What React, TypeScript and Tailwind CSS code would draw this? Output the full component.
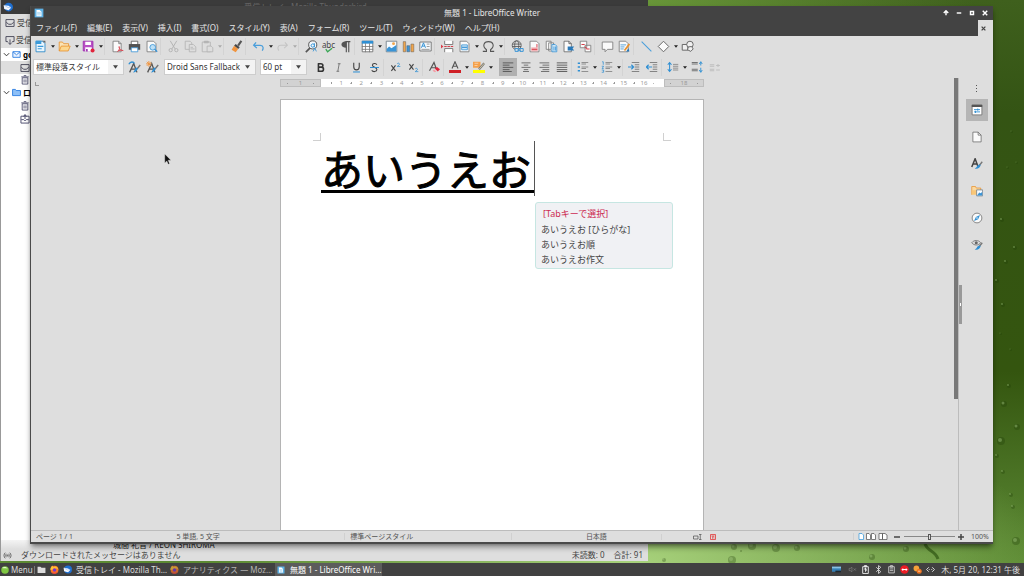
import React from 'react'

const icons: Record<string, React.ReactNode> = {
  newDoc: (
    <>
      <path d="M2.5 1.5h8l3 3v10h-11z" fill="#eaf5fc" stroke="#1f83c6" />
      <path d="M2 1h7v4H2zM4.500 7h7v1.500h-7zM4.500 10h5v1.500h-5z" fill="#3a9ad9" />
      <path d="M10 1h4v3z" fill="#666" />
    </>
  ),
  open: (
    <>
      <path d="M1.500 13.500v-11h4l1.500 2h6v3" fill="#fbe3b5" stroke="#e8912d" />
      <path d="M1.500 13.500l2.500-6h11l-2.500 6z" fill="#fcd78f" stroke="#e8912d" />
    </>
  ),
  save: (
    <>
      <path d="M1.500 1.500h12v12h-12z" fill="#b94fc4" stroke="#9b2fae" />
      <path d="M4 2h7v4H4zM4 9h8v5H4z" fill="#fff" />
      <path d="M5 11h2v3H5z" fill="#9b2fae" />
      <circle cx="13" cy="13" r="2.500" fill="#e0243b" />
    </>
  ),
  pdf: (
    <>
      <path d="M2.500 1.500h7l3 3v10h-10z" fill="#fafafa" stroke="#777" />
      <path d="M9.500 1.500v3h3" fill="none" stroke="#777" />
      <path d="M8 14c3-2 3-5 2-6-1 2 2 5 5 5-3-1-5 0-7 1z" fill="#ed9aa0" stroke="#d8404b" />
    </>
  ),
  print: (
    <>
      <path d="M4 1.500h8V6H4z" fill="#fff" stroke="#555" />
      <path d="M1 5h14v7H1z" fill="#525252" />
      <path d="M4 9.500h8v5H4z" fill="#fff" stroke="#3a94d6" />
    </>
  ),
  preview: (
    <>
      <path d="M2.500 1.500h8l3 3v10h-11z" fill="#fafafa" stroke="#777" />
      <circle cx="9.500" cy="9" r="3.500" fill="#bfe0f5" stroke="#3a94d6" />
      <path d="M12 11.500l3 3" stroke="#3a94d6" strokeWidth="1.800" />
    </>
  ),
  cut: (
    <g fill="none" stroke="#b3b3b3" strokeWidth="1.200">
      <path d="M4 1l6 10M12 1L6 11" />
      <circle cx="4.500" cy="12.500" r="2" />
      <circle cx="11.500" cy="12.500" r="2" />
    </g>
  ),
  copy: (
    <g fill="#dedede" stroke="#b3b3b3">
      <path d="M1.500 1.500h6l2 2v8h-8z" />
      <path d="M6.500 5.500h5l3 3v6h-8z" />
      <path d="M8 9h3M8 11h5" />
    </g>
  ),
  paste: (
    <g fill="#dedede" stroke="#b3b3b3">
      <path d="M1.500 2.500h10v12h-10z" />
      <path d="M4 1.500h5v2H4z" fill="#b3b3b3" />
      <path d="M7.500 7.500h5l2 2v5h-7z" />
    </g>
  ),
  brush: (
    <>
      <path d="M14 1l-4 6" stroke="#555" strokeWidth="2.500" />
      <path d="M7 5l5 4-2 2-5-4z" fill="#484848" />
      <path d="M5 7l5 4-3 4-5-3z" fill="#f0943e" />
    </>
  ),
  undo: <path d="M5 3L2 6.500 6 10M2.500 6.500H10c4 0 4.500 4 2.500 6.500" fill="none" stroke="#4a9edb" strokeWidth="1.500" />,
  redo: <path d="M11 3l3 3.500-4 3.500M13.500 6.500H6c-4 0-4.500 4-2.500 6.500" fill="none" stroke="#c4c4c4" strokeWidth="1.300" />,
  find: (
    <>
      <circle cx="9.500" cy="6" r="5" fill="#f4f8fb" stroke="#555" strokeWidth="1.200" />
      <path d="M6 10l-5 5" stroke="#555" strokeWidth="2" />
      <path d="M11.500 4v5M11.500 6.500a2 2 0 1 0-.1 1" fill="none" stroke="#2f8fd3" strokeWidth="1.200" />
      <path d="M10 14l2-4 2 4" fill="none" stroke="#2f8fd3" />
    </>
  ),
  pilcrow: (
    <>
      <path d="M8 2h6M9 2v13M12 2v13" stroke="#555" strokeWidth="1.400" />
      <path d="M9 1.500v8C1 9.500 1 1.500 9 1.500z" fill="#555" />
    </>
  ),
  table: (
    <>
      <path d="M1.500 1.500h13v13h-13z" fill="#fff" stroke="#666" />
      <path d="M1 1h14v3.500H1z" fill="#2f8fd3" />
      <path d="M1 8h14M1 11.500h14M5.500 4v11M10.500 4v11" stroke="#777" />
    </>
  ),
  image: (
    <>
      <path d="M1.500 1.500h13v13h-13z" fill="#f7fbfe" stroke="#6c7780" />
      <path d="M2 14v-3l3-3 3 2 6-4v8z" fill="#3a94d6" />
      <circle cx="10.500" cy="4.500" r="1.800" fill="#f2a54a" />
    </>
  ),
  chart: (
    <g stroke="#5a5a5a" strokeWidth=".600">
      <path d="M1.500 2h3v12.500h-3z" fill="#f2a54a" />
      <path d="M6 7h3.500v7.500H6z" fill="#3a94d6" />
      <path d="M11 5h3.500v9.500H11z" fill="#f2a54a" />
    </g>
  ),
  textBox: (
    <>
      <path d="M1 2.500h14v11H1z" fill="#f4f8fb" stroke="#666" />
      <path d="M3 9.500l2.500-6 2.500 6M4 7.500h3" fill="none" stroke="#2f8fd3" strokeWidth="1.200" />
      <path d="M9.500 5H13M9.500 8H13M3 11.500h10" stroke="#888" />
    </>
  ),
  pageBreak: (
    <>
      <path d="M4.500 1v4.500h10V1M4.500 15v-4.500h10V15" fill="#fff" stroke="#666" />
      <path d="M4 8h12" stroke="#d8404b" strokeDasharray="3 1" strokeWidth="1.300" />
      <path d="M0 5.500L3 8l-3 2.500z" fill="#d8404b" />
    </>
  ),
  field: (
    <>
      <path d="M2.500 1.500h8l3 3v10h-11z" fill="#fafafa" stroke="#777" />
      <path d="M4.500 6h7v6h-7z" fill="#cfe7f6" stroke="#3a94d6" />
      <path d="M5 9h6" stroke="#3a94d6" strokeWidth="1.500" />
    </>
  ),
  omega: <path d="M1 14h4.500v-2C0 8 2 2 8 2s8 6 2.500 10v2H15" fill="none" stroke="#555" strokeWidth="1.300" />,
  link: (
    <>
      <g fill="none" stroke="#555">
        <circle cx="7" cy="6.500" r="5.500" />
        <ellipse cx="7" cy="6.500" rx="2.500" ry="5.500" />
        <path d="M1.500 5h11M1.500 8h11" />
      </g>
      <path d="M5 10.500h4v3.500H5zM11 10.500h4v3.500h-4zM8 12.500h4" fill="#dedede" stroke="#3a94d6" strokeWidth="1.200" />
    </>
  ),
  footnote: (
    <>
      <path d="M2.500 1.500h8l3 3v10h-11z" fill="#fafafa" stroke="#777" />
      <path d="M4 9h8v5H4z" fill="#f3b2b6" />
      <path d="M4.500 11.500h7M11 5v4" stroke="#d8404b" strokeWidth="1.200" />
    </>
  ),
  endnote: (
    <>
      <path d="M1.500 1.500h6v10h-6zM4.500 3.500h6v10h-6z" fill="#fafafa" stroke="#777" />
      <path d="M8.500 5.500h4l2 2v7h-6z" fill="#cfe7f6" stroke="#3a94d6" />
      <path d="M11 8v5M13 8v5" stroke="#3a94d6" />
    </>
  ),
  bookmark: (
    <>
      <path d="M2.500 1.500h6l3 3v10h-9z" fill="#fafafa" stroke="#666" />
      <path d="M8.500 1.500v3h3" fill="none" stroke="#555" />
      <path d="M7 8h8l-2 2.500 2 2.500H7z" fill="#2878b8" />
    </>
  ),
  crossRef: (
    <>
      <path d="M1.500 1.500h8v8h-8zM7.500 6.500h7v8h-7z" fill="#fafafa" stroke="#777" />
      <path d="M3 5.500h4M9 11h4M7 8l3 3" stroke="#d8404b" strokeWidth="1.300" />
    </>
  ),
  comment: <path d="M1.500 2.500h13v9H8l-3 3v-3H1.500z" fill="#fafafa" stroke="#777" />,
  track: (
    <>
      <path d="M1.500 1.500h8l3 3v10h-11z" fill="#fafafa" stroke="#777" />
      <path d="M3 6h7M3 8.500h5M3 11h4" stroke="#3a94d6" />
      <path d="M14 5l-6 8" stroke="#e8912d" strokeWidth="2.200" />
      <path d="M13 10l-3 4h4z" fill="#2878b8" />
    </>
  ),
  line: <path d="M2 2l12 12" stroke="#4a9edb" strokeWidth="1.300" />,
  diamond: <path d="M8 1.500L14.500 8 8 14.500 1.500 8z" fill="#fafafa" stroke="#666" strokeWidth="1.200" />,
  draw: (
    <g fill="#f0f0f0" stroke="#666" strokeWidth="1.200">
      <path d="M1.500 5.500h7v7h-7z" />
      <circle cx="11" cy="5.500" r="4" />
      <path d="M9 8.500l4-.5 2 3-3 3-4-2z" />
    </g>
  ),
  updateStyle: (
    <>
      <path d="M2 14L7 3l4 11M3.500 10h6" fill="none" stroke="#555" strokeWidth="1.600" />
      <path d="M1 4c2-4 6-3 7-1" fill="none" stroke="#2f8fd3" strokeWidth="1.600" />
      <path d="M15 5l-4 5" stroke="#777" strokeWidth="1.800" />
      <path d="M12 9c-1 4-3 5-6 5 2-1 2-4 4-6z" fill="#2f8fd3" />
    </>
  ),
  newStyle: (
    <>
      <path d="M2 14L7 3l4 11M3.500 10h6" fill="none" stroke="#555" strokeWidth="1.600" />
      <path d="M3.500 0v7M0 3.500h7M1 1l5 5M6 1L1 6" stroke="#f0943e" strokeWidth="1.100" />
      <path d="M15 5l-4 5" stroke="#777" strokeWidth="1.800" />
      <path d="M12 9c-1 4-3 5-6 5 2-1 2-4 4-6z" fill="#2f8fd3" />
    </>
  ),
  bold: <path d="M4 2.500h4.500c4 0 4 5 0 5H5h4c4.500 0 4.500 6 0 6H5v-11" fill="none" stroke="#333" strokeWidth="2.300" />,
  italic: <path d="M7 2.500h4M5 13.500h4M9 2.500l-2 11" fill="none" stroke="#666" strokeWidth="1.200" />,
  underline: (
    <>
      <path d="M4 1v6c0 6 8 6 8 0V1" fill="none" stroke="#444" strokeWidth="1.600" />
      <path d="M3 14.500h10" stroke="#2f8fd3" strokeWidth="1.500" />
    </>
  ),
  strike: (
    <>
      <path d="M11.500 4C10 1 4.500 2 5 5s6.500 2.500 6.500 6-6 4-7.500 1" fill="none" stroke="#444" strokeWidth="1.500" />
      <path d="M1.500 8h13" stroke="#2f8fd3" strokeWidth="1.500" />
    </>
  ),
  sup: (
    <>
      <path d="M2 5l6 8M8 5l-6 8" stroke="#444" strokeWidth="1.600" />
      <path d="M10.500 2.500c2-2 4 0 3 1.500l-3 2.500H15" fill="none" stroke="#2f8fd3" strokeWidth="1.100" />
    </>
  ),
  sub: (
    <>
      <path d="M2 3l6 8M8 3l-6 8" stroke="#444" strokeWidth="1.600" />
      <path d="M10.500 10c2-2 4 0 3 1.500l-3 2.500H15" fill="none" stroke="#2f8fd3" strokeWidth="1.100" />
    </>
  ),
  clear: (
    <>
      <path d="M2 13L8 2l3 8M4 9h6" fill="none" stroke="#555" strokeWidth="1.600" />
      <path d="M9 10l3-2 4 3-3 3z" fill="#e0243b" />
      <path d="M8 11l3 3-2 1-3-2z" fill="#f3a0a8" />
    </>
  ),
  fontColor: (
    <>
      <path d="M4 10l4-9 4 9M5.500 7h5" fill="none" stroke="#555" strokeWidth="1.500" />
      <path d="M0 12h16v4H0z" fill="#cf2027" />
    </>
  ),
  highlight: (
    <>
      <path d="M0 1h10v8H0z" fill="#f5a04a" />
      <path d="M2 3h5M2 6h4" stroke="#fbdcb8" />
      <path d="M15 3L8 11" stroke="#777" strokeWidth="3" />
      <path d="M15 3L8 11" stroke="#e8dcb0" strokeWidth="1" />
      <path d="M0 12h16v4H0z" fill="#ffff00" />
    </>
  ),
  left: <path d="M1 2.500h14M1 5.500h9M1 8.500h14M1 11.500h9M1 14h12" stroke="#555" strokeWidth="1.200" />,
  center: <path d="M2 2.500h12M5 5.500h6M2 8.500h12M5 11.500h6M4 14h8" stroke="#666" strokeWidth="1.200" />,
  right: <path d="M2 2.500h13M6 5.500h9M2 8.500h13M6 11.500h9M4 14h11" stroke="#666" strokeWidth="1.200" />,
  justify: <path d="M1 2.500h14M1 5.500h14M1 8.500h14M1 11.500h14M1 14h14" stroke="#555" strokeWidth="1.200" />,
  bullets: (
    <>
      <path d="M6 2h9M6 4h6M6 8h9M6 10h6M6 14h9" stroke="#777" />
      <path d="M1 2h3v2H1zM1 7h3v2H1zM1 12h3v2H1z" fill="#2f8fd3" />
    </>
  ),
  numbers: (
    <>
      <path d="M6 2h9M6 4h6M6 8h9M6 10h6M6 14h9" stroke="#777" />
      <path d="M1.500 1h1.500v4M1 7h2.500l-2 3h2M1 12h2.500v3H1" fill="none" stroke="#2f8fd3" />
    </>
  ),
  indent: (
    <>
      <path d="M5 2h10M9 5h6M9 8h6M9 11h6M5 14h10" stroke="#666" />
      <path d="M0 8h7M4.500 5L7.500 8l-3 3" fill="none" stroke="#2f8fd3" strokeWidth="1.500" />
    </>
  ),
  outdent: (
    <>
      <path d="M5 2h10M9 5h6M9 8h6M9 11h6M5 14h10" stroke="#666" />
      <path d="M8 8H1M3.500 5L.500 8l3 3" fill="none" stroke="#2f8fd3" strokeWidth="1.500" />
    </>
  ),
  lineSpacing: (
    <>
      <path d="M8 4.500h7M8 7h7M8 9.500h7M8 12h7" stroke="#777" />
      <path d="M3.500 2v12M1 5l2.500-3L6 5M1 11l2.500 3L6 11" fill="none" stroke="#2f8fd3" strokeWidth="1.400" />
    </>
  ),
  paraUp: (
    <>
      <path d="M1 2h8M1 4h8M1 11h8M1 13h8" stroke="#666" strokeWidth="1.200" />
      <path d="M13 1v5M11 4l2-3 2 3M13 9v6M11 12l2 3 2-3" fill="none" stroke="#2f8fd3" strokeWidth="1.200" />
    </>
  ),
  paraDown: <path d="M1 5h6M1 7h6M1 11h6M1 13h6M12 4v4M9.500 6h5M9.500 12h5" fill="none" stroke="#bdbdbd" strokeWidth="1.300" />,
  properties: (
    <>
      <path d="M1.500 1.500h13v13h-13z" fill="#fff" stroke="#666" />
      <path d="M1 1h14v3H1z" fill="#555" />
      <path d="M4 7.500h8M4 10.500h8M9 6v3M6 9v3" stroke="#2f8fd3" strokeWidth="1.200" />
    </>
  ),
  page: (
    <>
      <path d="M2.500 1.500h7l4 4v9h-11z" fill="#fafafa" stroke="#666" />
      <path d="M9.500 1.500v4h4" fill="none" stroke="#666" />
    </>
  ),
  styles: (
    <>
      <path d="M1 12L5.500 1l4 11M3 8h6" fill="none" stroke="#444" strokeWidth="2" />
      <path d="M15 5l-4 5" stroke="#777" strokeWidth="1.800" />
      <path d="M13 9c-1 4-4 6-8 5 3-1 2-3 5-5z" fill="#2f8fd3" />
    </>
  ),
  gallery: (
    <>
      <path d="M1 13V2h5l1 2h6v3" fill="#fbd9a0" stroke="#e8912d" />
      <path d="M1 7h8v6H1z" fill="#f9c777" />
      <path d="M7.500 6.500h8v8h-8z" fill="#f7fbfe" stroke="#6c7780" />
      <path d="M8 14l3-4 2 1 2-2v5z" fill="#3a94d6" />
    </>
  ),
  navigator: (
    <>
      <circle cx="8" cy="8" r="6.500" fill="#fafafa" stroke="#666" />
      <path d="M12 4l-2.500 5.500L4 12l2.500-5.500z" fill="#2f8fd3" />
      <circle cx="8" cy="8" r="1" fill="#fff" />
    </>
  ),
  inspector: (
    <>
      <path d="M1 5c3-4 9-4 12 0-3 4-9 4-12 0z" fill="#ddd" stroke="#777" strokeWidth="1.200" />
      <circle cx="7" cy="5" r="2" fill="#666" />
      <path d="M15 5l-4 5" stroke="#777" strokeWidth="1.800" />
      <path d="M13 9c-1 4-4 6-8 5 3-1 2-3 5-5z" fill="#2f8fd3" />
    </>
  ),
  // mail client and panel
  inbox: <path d="M1.500 2.500h13v11h-13zM2 7l4 3h4l4-3" fill="none" stroke="#4b4b5c" strokeWidth="1.500" />,
  getMail: <path d="M4.500 10.500h-3v-8h13v8h-3M8 7v8M5 12l3 3 3-3" fill="none" stroke="#4b4b5c" strokeWidth="1.500" />,
  trash: <path d="M3.500 4.500h9v10h-9zM2 3h12M6 1h4M6.500 7v5M9.500 7v5" fill="none" stroke="#4b4b6c" strokeWidth="1.400" />,
  outbox: <path d="M1.500 3.500h13v11h-13zM2 9h4l2 2 2-2h4M8 8V1M5.500 4L8 1l2.500 3" fill="none" stroke="#4b4b6c" strokeWidth="1.500" />,
  mail: <path d="M1.500 3h13v10h-13zM2 3.500l6 5 6-5" fill="#e9f2ff" stroke="#2a7de1" strokeWidth="1.600" />,
  folderBlue: <path d="M1 13.500v-11h5l1.500 2H15v9z" fill="#8ec0f7" stroke="#2a7de1" strokeWidth="1.600" />,
  chevron: <path d="M2 5l6 6 6-6" fill="none" stroke="#333" strokeWidth="2.200" />,
  writer: (
    <>
      <path d="M1 1h14v14H1z" fill="#5fb2e6" />
      <path d="M4 3h5l3 3v7H4z" fill="#fff" />
      <path d="M5 7h6M5 9h6M5 11h6" stroke="#8cc6ea" />
    </>
  ),
  thunderbird: (
    <>
      <circle cx="9" cy="8" r="7" fill="#1f6fd0" />
      <path d="M1 5l8 1 4 3-4 4-7-2z" fill="#f4f8ff" />
      <path d="M2 5l6 4 5-1" fill="none" stroke="#99b9e6" />
    </>
  ),
  firefox: (
    <>
      <circle cx="8" cy="8.500" r="7" fill="#ff7b1c" />
      <path d="M1 9C0 5 3 3 4 1l2 3c4-3 8 0 9 5-2-3-4-3-5-2z" fill="#ffc338" />
      <circle cx="8" cy="9" r="3.200" fill="#7a35c9" />
      <path d="M2 11c3 4 9 4 12-1-1 6-9 8-12 1z" fill="#f02e50" />
    </>
  ),
  files: <path d="M1 14V3h5l2 2h7v9z" fill="#dcdcdc" />,
  mint: (
    <>
      <circle cx="8" cy="8" r="7.500" fill="#7fc742" />
      <path d="M2 4c4-3 9-2 11 1-4-1-8 0-11-1z" fill="#e5f6d4" />
    </>
  ),
  signal: (
    <g fill="none" stroke="#555" strokeWidth="1.500">
      <path d="M4 3C1 6 1 10 4 13M12 3c3 3 3 7 0 10M6 5c-1.500 2-1.500 4 0 6M10 5c1.500 2 1.500 4 0 6" />
      <circle cx="8" cy="8" r="1" />
    </g>
  ),
  display: (
    <>
      <path d="M0 3h16v9H0z" fill="#357fb5" />
      <path d="M0 3h16v3H0z" fill="#8ac0e2" />
      <path d="M6 10h10v3H6z" fill="#1d2830" />
    </>
  ),
  mute: <path d="M2 6h2l3-2v8L4 10H2zM10 6l4 4M14 6l-4 4" fill="none" stroke="#8b8b8b" />,
  battery: <path d="M3 3h10v12H3zM6 1h4v2H6zM8 5v7M6 8l2-3 2 5" fill="none" stroke="#f2f2f2" strokeWidth="1.600" />,
  bluetooth: <path d="M4 4l8 8-4 3V1l4 3-8 8" fill="none" stroke="#d8d8d8" strokeWidth="1.600" />,
  clipboard: <path d="M3 3h10v11H3zM6 1h4v3H6zM5 7h6M5 10h6" fill="none" stroke="#c8c8c8" strokeWidth="1.600" />,
  redDot: (
    <>
      <circle cx="8" cy="8" r="7.500" fill="#ec1c24" />
      <path d="M3 8h10M5 6v4M11 6v4" stroke="#fff" strokeWidth="1.800" />
    </>
  ),
  orange: (
    <>
      <circle cx="6" cy="6" r="5" fill="#f5a13a" />
      <circle cx="11" cy="11" r="4.500" fill="#ee7420" />
      <path d="M9 11h4" stroke="#fff" />
    </>
  ),
  network: <path d="M5 4L1 8l4 4M11 4l4 4-4 4M5 8h1.500M9.500 8H11" fill="none" stroke="#e6e6e6" strokeWidth="1.700" />,
}

function Icon({ name, className = 'size-[13px]' }: { name: string; className?: string }) {
  return (
    <svg viewBox="0 0 16 16" className={`shrink-0 ${className}`} fill="none" aria-hidden="true">
      {icons[name]}
    </svg>
  )
}

function Arrow({ muted = false }: { muted?: boolean }) {
  return (
    <svg viewBox="0 0 6 4" className="w-[4px] h-[3px]" aria-hidden="true">
      <path d="M0 0h6L3 4z" fill={muted ? '#aaa' : '#222'} />
    </svg>
  )
}

// '|' draws a divider, 'v' a drop-down arrow, 'V' a disabled one
const standardBar = [
  'newDoc', 'v', 'open', 'v', 'save', 'v', '|', 'pdf', 'print', 'preview', '|', 'cut', 'copy', 'paste', 'V', '|',
  'brush', '|', 'undo', 'v', 'redo', 'V', '|', 'find', 'spell', 'pilcrow', '|', 'table', 'v', 'image', 'chart',
  'textBox', '|', 'pageBreak', 'field', 'v', 'omega', 'v', '|', 'link', 'footnote', 'endnote', 'bookmark', 'crossRef',
  '|', 'comment', 'track', '|', 'line', 'diamond', 'v', 'draw',
]

const formatBar = [
  'bold', 'italic', 'underline', 'strike', '|', 'sup', 'sub', '|', 'clear', '|', 'fontColor', 'v', 'highlight', 'v',
  '||', 'left', 'center', 'right', 'justify', '|', 'bullets', 'v', 'numbers', 'v', '|', 'indent', 'outdent', '|',
  'lineSpacing', 'v', 'paraUp', 'paraDown',
]

function Spelling() {
  return (
    <span className="flex flex-col items-center text-[8px] leading-[7px] text-[#444]">
      abc
      <svg viewBox="0 0 10 5" className="w-[9px] h-[5px]" aria-hidden="true">
        <path d="M2 1l2 3 5-4" fill="none" stroke="#3aa655" strokeWidth="1.500" />
      </svg>
    </span>
  )
}

function StandardBar() {
  return (
    <div role="toolbar" aria-label="標準" className="flex items-center h-[21px] pl-px">
      {standardBar.map((item, i) => {
        if (item === '|') return <span key={i} className="w-[5px] h-[17px] shrink-0 border-l border-[#d3d3d3]" />
        if (item === 'v' || item === 'V')
          return (
            <button key={i} aria-label="メニューを開く" className="w-[7px] h-[18px] shrink-0 flex items-center justify-center">
              <Arrow muted={item === 'V'} />
            </button>
          )
        return (
          <button key={i} aria-label={item} className="w-[17px] h-[18px] shrink-0 flex items-center justify-center">
            {item === 'spell' ? <Spelling /> : <Icon name={item} />}
          </button>
        )
      })}
    </div>
  )
}

function Combo({ label, value, className }: { label: string; value: string; className: string }) {
  return (
    <div className={`flex h-[16px] shrink-0 bg-white border border-[#cdcdcd] ${className}`}>
      <input aria-label={label} defaultValue={value} className="min-w-0 flex-1 pl-[2px] text-[8px] leading-[14px] text-[#333] outline-none" />
      <button aria-label={`${label}を開く`} className="w-[15px] flex items-center justify-center bg-[#f3f3f3]">
        <svg viewBox="0 0 6 4" className="w-[5px] h-[4px]" aria-hidden="true">
          <path d="M0 0h6L3 4z" fill="#444" />
        </svg>
      </button>
    </div>
  )
}

const letterButtons = ['bold', 'italic', 'underline', 'strike', 'sup', 'sub']

function FormatBar() {
  return (
    <div role="toolbar" aria-label="書式設定" className="flex items-center h-[20px] mb-px pl-[2px]">
      <Combo label="段落スタイル" value="標準段落スタイル" className="w-[91px]" />
      <button aria-label="スタイルの更新" className="ml-px w-[18px] flex justify-center"><Icon name="updateStyle" /></button>
      <button aria-label="新規スタイル" className="w-[18px] flex justify-center"><Icon name="newStyle" /></button>
      <Combo label="フォント名" value="Droid Sans Fallback" className="w-[92px] ml-[3px]" />
      <Combo label="フォントサイズ" value="60 pt" className="w-[47px] ml-1 mr-1" />
      {formatBar.map((item, i) => {
        if (item === '|') return <span key={i} className="w-[3px] h-[17px] shrink-0 border-l border-[#d3d3d3]" />
        if (item === '||') return <span key={i} className="w-[5px] h-[17px] shrink-0" />
        if (item === 'v')
          return (
            <button key={i} aria-label="メニューを開く" className="w-[6px] h-[18px] shrink-0 flex items-center justify-center">
              <Arrow />
            </button>
          )
        return (
          <button
            key={i}
            aria-label={item}
            className={`w-[18px] h-[18px] shrink-0 flex items-center justify-center ${item === 'left' ? 'bg-[#b0b0b0]' : ''}`}
          >
            <Icon name={item} className={letterButtons.includes(item) ? 'size-[11px]' : 'size-[12px]'} />
          </button>
        )
      })}
    </div>
  )
}

function Ruler() {
  return (
    <div className="flex w-[424px] h-[8px] text-[6px] leading-[7px] text-[#999]">
      <div className="w-[41px] bg-[#d2d2d2] border border-[#bdbdbd] flex items-center justify-around">
        <i className="w-px h-px bg-[#999]" />
        1
        <i className="w-px h-px bg-[#999]" />
      </div>
      <div className="flex-1 bg-white flex px-[10px]">
        {Array.from({ length: 16 }, (_, n) => (
          <div key={n} className="flex-1 flex items-center justify-between">
            <i className="w-px h-[2px] bg-[#999]" />
            <span>{n + 1}</span>
            <i className="w-px h-px bg-[#bbb]" />
          </div>
        ))}
      </div>
      <div className="w-[40px] bg-[#d2d2d2] border border-[#bdbdbd] flex items-center justify-around">
        <i className="w-px h-px bg-[#999]" />
        18
        <i className="w-px h-px bg-[#999]" />
      </div>
    </div>
  )
}

function Suggestions() {
  return (
    <div className="absolute top-[102px] left-[254px] w-[138px] h-[67px] rounded-[3px] border border-[#c6e6e2] bg-[#f0f1f4] pl-[5px] pt-[3px] text-[9px] text-[#444] whitespace-nowrap">
      <p className="pl-[2px] leading-[16px] text-[#cc2a52]">[Tabキーで選択]</p>
      <ul className="leading-[15px]">
        <li>あいうえお [ひらがな]</li>
        <li>あいうえお順</li>
        <li>あいうえお作文</li>
      </ul>
    </div>
  )
}

function Sheet() {
  return (
    <div className="relative flex-1 w-[424px] mt-3 bg-white border border-b-0 border-[#b4b4b4] px-[32px] pt-[33px]">
      <div className="flex justify-between">
        <span className="size-[8px] border-r border-b border-[#d0d0d0]" />
        <span className="size-[8px] border-l border-b border-[#d0d0d0]" />
      </div>
      <div className="flex pl-[8px]">
        <p className="h-[52px] pr-[3px] border-b-3 border-black text-[42px] leading-[57px] text-black [-webkit-text-stroke:1px_black]">あいうえお</p>
        <span className="w-px h-[55px] bg-[#555]" />
      </div>
      <Suggestions />
    </div>
  )
}

function Sidebar() {
  return (
    <aside className="w-[34px] flex shrink-0">
      <div className="w-[3px] flex items-center">
        <button aria-label="サイドバーを隠す" className="w-[3px] h-[39px] bg-[#999] flex items-center justify-center">
          <i className="w-px h-[3px] bg-white" />
        </button>
      </div>
      <div className="flex-1 flex flex-col items-center gap-[5px] pr-[2px]">
        <button aria-label="サイドバーの設定" className="h-4 flex flex-col items-center justify-center gap-[2px] pt-1">
          <i className="size-px bg-[#555]" />
          <i className="size-px bg-[#555]" />
          <i className="size-px bg-[#555]" />
        </button>
        {['properties', 'page', 'styles', 'gallery', 'navigator', 'inspector'].map((name) => (
          <button
            key={name}
            aria-label={name}
            className={`size-[22px] flex items-center justify-center ${name === 'properties' ? 'bg-[#b5b5b5]' : ''}`}
          >
            <Icon name={name} className="size-[12px]" />
          </button>
        ))}
      </div>
    </aside>
  )
}

function StatusBar() {
  return (
    <footer className="flex items-center h-[12px] border-t border-[#bcbcbc] text-[7px] leading-none text-[#555] whitespace-nowrap">
      <span className="flex-[142] pl-[5px]">ページ 1 / 1</span>
      <span className="flex-[176] pl-[5px]">5 単語, 5 文字</span>
      <span className="flex-[168] pl-[5px] border-l border-[#d0d0d0]">標準ページスタイル</span>
      <span className="flex-[136] text-center border-l border-[#d0d0d0] pl-[20px]">日本語</span>
      <span className="flex-[56] flex items-center justify-end gap-[8px] pr-[20px] border-l border-[#d0d0d0]">
        <svg viewBox="0 0 18 12" className="w-[9px] h-[6px]" fill="none" stroke="#555" strokeWidth="1.500" aria-hidden="true">
          <path d="M1 4h9v6H1zM12 1h5M12 11h5M14.500 1v10" />
        </svg>
        <svg viewBox="0 0 12 12" className="size-[6px]" fill="none" stroke="#e03030" strokeWidth="1.500" aria-hidden="true">
          <path d="M1 1h10v10H1zM3 4h6M4 8h2M8 8h1M6 4v5" />
        </svg>
      </span>
      <span className="flex-[122] border-l border-[#d0d0d0]" />
      <span className="w-[37px] flex items-center gap-1 pl-1 border-l border-[#d0d0d0]">
        <svg viewBox="0 0 60 14" className="w-[30px] h-[7px]" fill="#fff" stroke="#555" strokeWidth="1.500" aria-hidden="true">
          <path d="M2 1h6l3 3v9H2z" stroke="#3a9ad9" />
          <path d="M17 1h5l3 3v9h-8zM27 1h5l3 3v9h-8zM42 1h7v12h-7zM49 1h5l4 3v9h-9z" />
        </svg>
      </span>
      <button aria-label="縮小" className="w-[14px] flex justify-center">
        <svg viewBox="0 0 6 6" className="size-[6px]" stroke="#444" strokeWidth="1.500" aria-hidden="true"><path d="M0 3h6" /></svg>
      </button>
      <input
        type="range"
        aria-label="ズーム"
        defaultValue={50}
        className="w-[51px] h-[1px] appearance-none bg-[#888] [&::-webkit-slider-thumb]:appearance-none [&::-webkit-slider-thumb]:w-[3px] [&::-webkit-slider-thumb]:h-[6px] [&::-webkit-slider-thumb]:border [&::-webkit-slider-thumb]:border-[#555] [&::-webkit-slider-thumb]:bg-[#dedede]"
      />
      <button aria-label="拡大" className="w-[12px] flex justify-center">
        <svg viewBox="0 0 6 6" className="size-[6px]" stroke="#444" strokeWidth="1.500" aria-hidden="true"><path d="M0 3h6M3 0v6" /></svg>
      </button>
      <span className="w-[26px] pl-[4px]">100%</span>
    </footer>
  )
}

const menus = [
  'ファイル(F)', '編集(E)', '表示(V)', '挿入(I)', '書式(O)', 'スタイル(Y)', '表(A)', 'フォーム(R)', 'ツール(T)',
  'ウィンドウ(W)', 'ヘルプ(H)',
]

const windowButtons = [
  { label: '常に手前', d: 'M4 1v6M1 4l3-3 3 3' },
  { label: '最小化', d: 'M1 4h6' },
  { label: '最大化', d: 'M2 2h4v4H2z' },
  { label: '閉じる', d: 'M1 1l6 6M7 1L1 7' },
]

function WriterWindow() {
  return (
    <section className="absolute top-[6px] bottom-[19px] left-[30px] right-[31px] flex flex-col bg-[#dedede] border-l border-b-2 border-[#4a4a4a] shadow-md shadow-black/40">
      <header className="flex items-center h-[14px] bg-[#434343] text-white px-[2px]">
        <Icon name="writer" className="size-[10px] ml-px" />
        <h1 className="flex-1 pl-px text-[8px] leading-none text-center text-[#e6e6e6] whitespace-nowrap">無題 1 - LibreOffice Writer</h1>
        <div className="flex justify-end">
          {windowButtons.map((b) => (
            <button key={b.label} aria-label={b.label} className="w-[13px] h-[13px] flex items-center justify-center">
              <svg viewBox="0 0 8 8" className="size-[6px]" fill="none" stroke="#fff" strokeWidth="1.900" aria-hidden="true">
                <path d={b.d} />
              </svg>
            </button>
          ))}
        </div>
      </header>
      <div className="flex h-[16px]">
        <nav className="flex-1 flex items-center gap-[10px] pl-[5px] bg-[#434343]">
          {menus.map((m) => (
            <button key={m} className="text-[8px] leading-none text-[#e6e6e6] whitespace-nowrap">{m}</button>
          ))}
        </nav>
        <button aria-label="文書を閉じる" className="w-[15px] pr-1 flex items-center justify-center">
          <svg viewBox="0 0 8 8" className="size-[5px]" stroke="#444" strokeWidth="2" aria-hidden="true"><path d="M1 1l6 6M7 1L1 7" /></svg>
        </button>
      </div>
      <StandardBar />
      <FormatBar />
      <div className="flex-1 min-h-0 flex">
        <span className="size-[4px] mt-1 ml-1 -mr-2 border-l border-b border-[#999]" />
        <main className="flex-1 min-w-0 flex flex-col items-center pt-px">
          <Ruler />
          <Sheet />
        </main>
        <div className="w-[6px] border-r border-[#bcbcbc] flex flex-col items-center">
          <span className="w-[4px] h-[71%] bg-[#787878]" />
        </div>
        <Sidebar />
      </div>
      <StatusBar />
    </section>
  )
}

function MailWindow() {
  return (
    <section className="absolute top-0 bottom-[2px] left-0 w-[648px] flex flex-col bg-white border-l border-[#999] overflow-hidden text-[8px] text-[#444]">
      <header className="flex items-center h-[14px] shrink-0 bg-[#3b3b3b] pl-[2px] pr-[50px] text-[#666]">
        <Icon name="thunderbird" className="size-[10px]" />
        <span className="flex-1 text-center leading-none">受信トレイ - Mozilla Thunderbird</span>
      </header>
      <div className="h-[34px] shrink-0 bg-[#dedede] flex flex-col justify-around whitespace-nowrap leading-none">
        <div className="w-[32px] flex items-center gap-[2px] pl-1"><Icon name="inbox" className="size-[10px]" />受信</div>
        <div className="w-[32px] flex items-center gap-px pl-1"><Icon name="getMail" className="size-[10px]" />受信</div>
      </div>
      <ul className="flex-1 w-[40px] leading-none whitespace-nowrap">
        <li className="flex items-center h-[13px] gap-[2px] pl-[2px] font-bold text-black">
          <Icon name="chevron" className="size-[7px]" /><Icon name="mail" className="size-[9px]" />go
        </li>
        <li className="flex items-center h-[13px] pl-[19px] bg-[#dedede]"><Icon name="inbox" className="size-[10px]" /></li>
        <li className="flex items-center h-[12px] pl-[19px]"><Icon name="trash" className="size-[10px]" /></li>
        <li className="flex items-center h-[13px] gap-[2px] pl-[2px] font-bold text-black">
          <Icon name="chevron" className="size-[7px]" /><Icon name="folderBlue" className="size-[9px]" />ロ
        </li>
        <li className="flex items-center h-[13px] pl-[19px]"><Icon name="trash" className="size-[10px]" /></li>
        <li className="flex items-center h-[13px] pl-[19px]"><Icon name="outbox" className="size-[10px]" /></li>
      </ul>
      <p className="h-[9px] shrink-0 pl-[112px] text-[8px] leading-[9px] text-[#222] bg-[linear-gradient(#f4f4f4,#dedede)]">城間 礼音 / REON SHIROMA</p>
      <footer className="flex items-center h-[12px] shrink-0 gap-[9px] bg-[#dedede] pl-[2px] pr-[5px] leading-none whitespace-nowrap">
        <Icon name="signal" className="size-[9px]" />
        <span className="flex-1">ダウンロードされたメッセージはありません</span>
        <span>未読数: 0</span>
        <span>合計: 91</span>
      </footer>
    </section>
  )
}

const drops = [
  [1012, 132, 1], [1017, 163, 1], [1002, 220, 2], [1008, 168, 1], [1015, 248, 2], [1006, 262, 2], [997, 281, 2],
  [1003, 305, 2], [1001, 334, 1], [1011, 350, 1], [1009, 386, 2], [1004, 404, 3], [1017, 427, 3], [1001, 441, 4],
  [997, 456, 2], [1003, 472, 2], [1011, 495, 2], [1013, 507, 2], [734, 547, 3], [752, 546, 4], [741, 551, 1],
  [732, 560, 4], [776, 548, 4], [797, 548, 3], [664, 560, 2], [872, 557, 3], [906, 549, 3], [1016, 541, 4],
]

function Wallpaper() {
  return (
    <svg className="absolute inset-0 w-full h-full" aria-hidden="true">
      {drops.map(([x, y, r]) => (
        <g key={`${x}-${y}`}>
          <ellipse cx={x} cy={y} rx={r} ry={r} fill="#1f3a08" opacity=".3" />
          <circle cx={x - 1} cy={y - 1} r={r / 2} fill="#a9cf86" opacity=".4" />
        </g>
      ))}
      <path d="M925 544c3 8 10 6 13 15" fill="none" stroke="#2f5512" strokeWidth="3" opacity=".7" />
    </svg>
  )
}

function Taskbar() {
  return (
    <footer className="flex items-center h-[13px] shrink-0 bg-[#414141] text-[8px] leading-none text-[#dcdcdc] whitespace-nowrap">
      <button className="flex items-center gap-[2px] w-[35px] pl-px border-r border-[#777]"><Icon name="mint" className="size-[8px]" />Menu</button>
      <button aria-label="ファイル" className="w-[13px] flex justify-center"><Icon name="files" className="size-[9px]" /></button>
      <button aria-label="Firefox" className="w-[13px] flex justify-center"><Icon name="firefox" className="size-[9px]" /></button>
      <button aria-label="Thunderbird" className="w-[13px] flex justify-center"><Icon name="thunderbird" className="size-[9px]" /></button>
      <button className="w-[96px] pl-[2px] text-left">受信トレイ - Mozilla Th…</button>
      <button className="w-[105px] flex items-center gap-[4px] text-[#b5b5b5]">
        <Icon name="firefox" className="size-[9px] opacity-70" />アナリティクス — Moz…
      </button>
      <button className="w-[107px] h-[13px] flex items-center gap-[5px] pl-[2px] bg-[#5c5c5c] text-white">
        <Icon name="writer" className="size-[8px]" />無題 1 - LibreOffice Wri…
      </button>
      <div className="flex-1 flex items-center justify-end gap-[4px]">
        <Icon name="display" className="size-[9px] mr-[3px]" />
        {['mute', 'battery', 'bluetooth', 'clipboard', 'redDot', 'orange', 'network'].map((name) => (
          <Icon key={name} name={name} className="size-[9px]" />
        ))}
      </div>
      <time className="pl-[6px] pr-[4px]">木, 5月 20, 12:31 午後</time>
    </footer>
  )
}

export default function App() {
  return (
    <div className="h-screen flex flex-col overflow-hidden font-['Noto_Sans','Noto_Sans_CJK_JP',sans-serif]">
      <div className="relative flex-1 min-h-0 overflow-hidden bg-[radial-gradient(ellipse_420px_160px_at_62%_100%,#a8d27c,transparent),radial-gradient(ellipse_340px_60px_at_62%_0%,#6a983a,transparent),linear-gradient(#3f601d,#345414_20%,#34550f_66%,#4c7526_86%,#5c8a33)]">
        <Wallpaper />
        <MailWindow />
        <WriterWindow />
        <svg viewBox="0 0 10 16" className="absolute top-[154px] left-[164px] w-[7px] h-[11px]" aria-hidden="true">
          <path d="M1 0v13l3-3 2 5 2-1-2-5h4z" fill="#111" stroke="#eee" strokeWidth=".500" />
        </svg>
      </div>
      <Taskbar />
    </div>
  )
}
